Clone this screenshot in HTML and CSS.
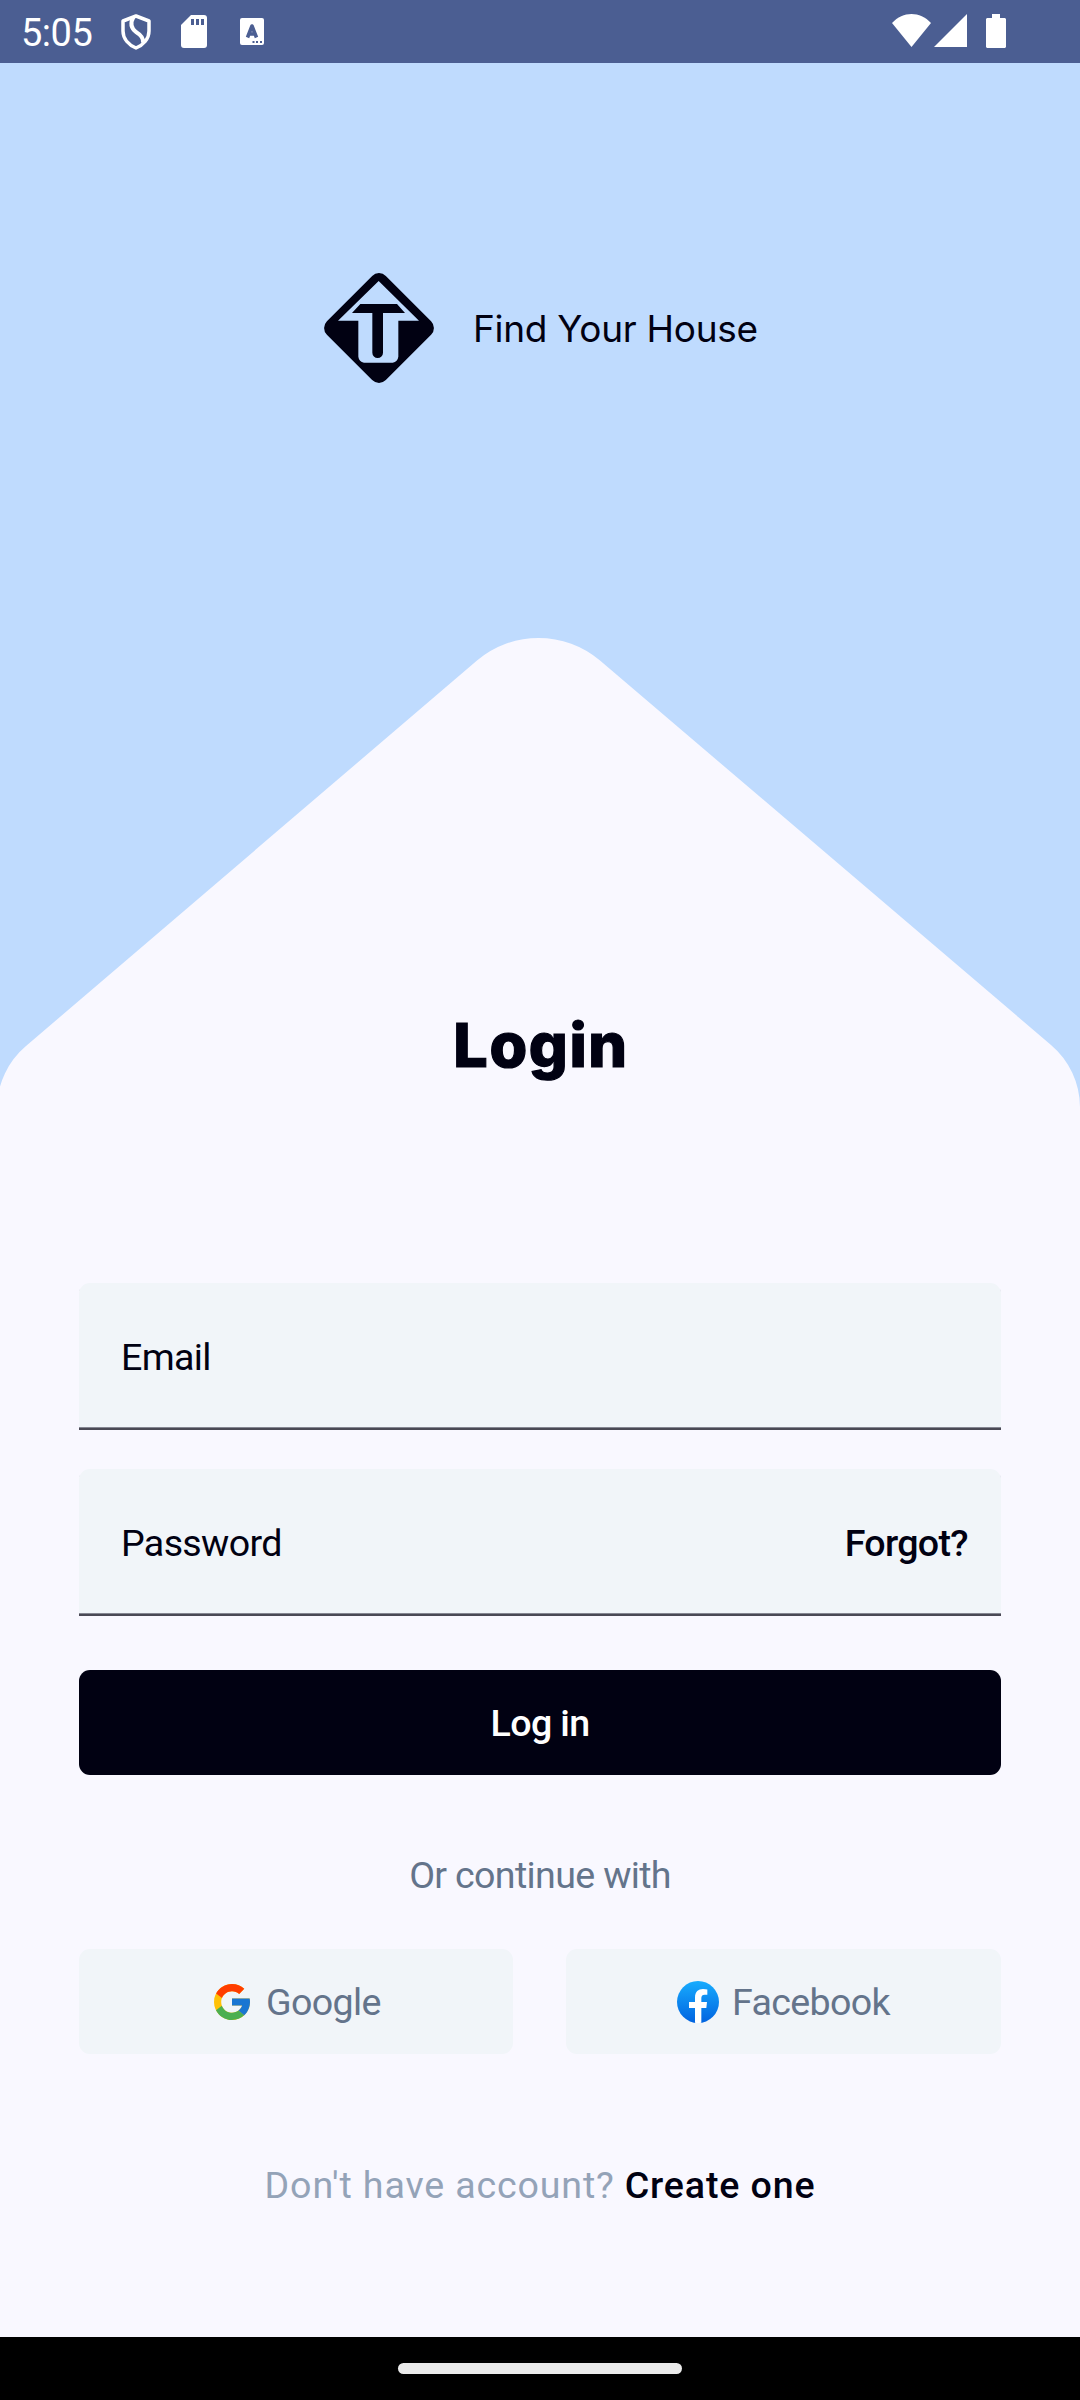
FILE: index.html
```html
<!DOCTYPE html>
<html lang="en">
<head>
<meta charset="utf-8">
<title>Login</title>
<link rel="stylesheet" href="styles.css">
</head>
<body>
<div class="screen">
  <header class="status">
    <span class="clock">5:05</span>
    <svg class="shield" width="30" height="36" viewBox="0 0 30 36" fill="none" stroke="#fff" stroke-width="3.500" stroke-linejoin="round"><path d="M15 2 28 7V17C28 25 22 31 15 34 8 31 2 25 2 17V7Z"/><path d="M12.500 3C9 9 10 14 15 18 20 21 23 24 22 29" stroke-width="4"/></svg>
    <svg class="sdcard" width="26" height="33" viewBox="0 0 26 33"><path fill="#fff" d="M10 0H23a3 3 0 0 1 3 3V30a3 3 0 0 1-3 3H3a3 3 0 0 1-3-3V10Z"/><path fill="#4b5e92" d="M10 4h3v6h-3zM15 4h3v6h-3zM20 4h3v6h-3z"/></svg>
    <svg class="keyboard" width="24" height="27" viewBox="0 0 24 27"><rect width="24" height="27" rx="2" fill="#fff"/><path d="M7.500 19.500 12 8 16.500 19.500M9 16h6" fill="none" stroke="#4b5e92" stroke-width="3.600" stroke-linejoin="round"/><path fill="#4b5e92" d="M12.500 23h2v2h-2zM16 23h2v2h-2zM20 23h2v2h-2z"/></svg>
    <span class="spacer"></span>
    <svg class="wifi" width="39" height="33" viewBox="0 0 39 33"><path fill="#fff" d="M0 9C11-3 28-3 39 9L19.500 33Z"/></svg>
    <svg class="signal" width="33" height="33" viewBox="0 0 33 33"><path fill="#fff" d="M33 0V33H0Z"/></svg>
    <svg class="battery" width="20" height="34" viewBox="0 0 20 34"><path fill="#fff" d="M6 0h8v4h5l1 1v28l-1 1H1l-1-1V5l1-1h5z"/></svg>
  </header>

  <main class="content">
    <svg class="roof" width="1080" height="1060" viewBox="0 63 1080 1060"><path fill="#f9f8ff" d="M-3 1123V1107A82 82 0 0 1 26 1046L477 660.500A95 95 0 0 1 600 660.500L1051 1045A82 82 0 0 1 1080 1107V1123Z"/></svg>

    <div class="brand">
      <svg width="110" height="110" viewBox="42 39 330 330"><rect x="82" y="79" width="250" height="250" rx="29" fill="#010112" transform="rotate(45 207 204)"/><path fill="#bfdbfe" d="M206 63 327 182H265V290Q263 305 248 308H162Q147 305 145 290V182H84Z"/><path fill="#010112" d="M151 132H261L285 159H219V278A16 16 0 0 1 187 278V159H126Z"/></svg>
      <span class="brand-name">Find Your House</span>
    </div>

    <h1 class="title">Login</h1>

    <form class="form">
      <div class="field"><span class="label">Email</span></div>
      <div class="field"><span class="label">Password</span><a class="forgot">Forgot?</a></div>
      <button class="submit" type="button">Log in</button>
    </form>

    <p class="or"><span>Or continue with</span></p>

    <div class="social">
      <button class="provider google" type="button">
        <svg width="36" height="36" viewBox="4 4 40 40"><path fill="#FFC107" d="M43.611 20.083H42V20H24v8h11.303c-1.649 4.657-6.080 8-11.303 8-6.627 0-12-5.373-12-12s5.373-12 12-12c3.059 0 5.842 1.154 7.961 3.039l5.657-5.657C34.046 6.053 29.268 4 24 4 12.955 4 4 12.955 4 24s8.955 20 20 20 20-8.955 20-20c0-1.341-.138-2.650-.389-3.917z"/><path fill="#FF3D00" d="M6.306 14.691l6.571 4.819C14.655 15.108 18.961 12 24 12c3.059 0 5.842 1.154 7.961 3.039l5.657-5.657C34.046 6.053 29.268 4 24 4 16.318 4 9.656 8.337 6.306 14.691z"/><path fill="#4CAF50" d="M24 44c5.166 0 9.860-1.977 13.409-5.192l-6.190-5.238C29.211 35.091 26.715 36 24 36c-5.202 0-9.619-3.317-11.283-7.946l-6.522 5.025C9.505 39.556 16.227 44 24 44z"/><path fill="#1976D2" d="M43.611 20.083H42V20H24v8h11.303c-.792 2.237-2.231 4.166-4.087 5.571l6.193 5.238C36.971 39.205 44 34 44 24c0-1.341-.138-2.650-.389-3.917z"/></svg>
        <span class="name">Google</span>
      </button>
      <button class="provider facebook" type="button">
        <svg width="42" height="42" viewBox="0 0 126 126"><defs><linearGradient id="fb" x1="0" y1="0" x2="0" y2="1"><stop offset="0" stop-color="#18acfe"/><stop offset="1" stop-color="#0163e0"/></linearGradient></defs><circle cx="63" cy="63" r="63" fill="url(#fb)"/><path fill="#fff" d="M54 125.500V81H36V63H54V50C54 32 64 24 78 24Q86 24 91 25.500V41H83Q73 41 73 51V63H90L88 81H73V125.500Q63 127 54 125.500Z"/></svg>
        <span class="name">Facebook</span>
      </button>
    </div>

    <p class="signup"><span class="ask">Don't have account?</span><a class="create">Create one</a></p>
  </main>

  <footer class="navbar"><div class="pill"></div></footer>
</div>
</body>
</html>
```
FILE: styles.css
```css
* { box-sizing: border-box; }

body {
  margin: 0;
  font-family: Roboto, "Noto Sans", sans-serif;
  font-size: 37.6px;
  line-height: 44px;
  letter-spacing: -0.66px;
  color: #010112;
}

svg { display: block; flex: none; }

.screen {
  width: 1080px;
  height: 2400px;
  display: flex;
  flex-direction: column;
  overflow: hidden;
}

.status {
  height: 63px;
  flex: none;
  display: flex;
  align-items: flex-start;
  padding: 14px 74px 0 21px;
  background: #4b5e92;
}

.clock {
  width: 100px;
  height: 44px;
  font-size: 38px;
  line-height: 39px;
  letter-spacing: -0.5px;
  color: #fff;
}

.sdcard { margin: 1px 0 0 30px; }
.keyboard { margin: 4px 0 0 33px; }
.spacer { flex: 1; }
.signal { margin-left: 3px; }
.battery { margin-left: 19px; }

.content {
  position: relative;
  flex: 1;
  display: flex;
  flex-direction: column;
  padding: 210px 79px 0;
  background: linear-gradient(#bfdbfe 1060px, #f9f8ff 1060px);
}

.content > * { position: relative; }
.content > .roof { position: absolute; top: 0; left: 0; }

.brand {
  height: 110px;
  display: flex;
  align-items: center;
  gap: 39px;
  padding-left: 245px;
}

.brand-name {
  padding-top: 2px;
  font-family: Inter, sans-serif;
  font-size: 37px;
  letter-spacing: -0.28px;
  white-space: nowrap;
}

.title {
  margin: 624px 0 0;
  height: 76px;
  text-align: center;
  font-family: Inter, sans-serif;
  font-size: 61px;
  font-weight: 800;
  line-height: 76px;
  letter-spacing: 1.6px;
  text-indent: 2px;
  -webkit-text-stroke: 1.2px #010112;
}

.form { margin-top: 200px; display: flex; flex-direction: column; }

.field {
  height: 147px;
  margin-bottom: 39px;
  padding: 0 33px 0 42px;
  display: flex;
  justify-content: space-between;
  align-items: center;
  background: #f1f5f9;
  border-radius: 11px 11px 0 0;
  box-shadow: inset 0 -2px #4a4955, inset 0 -3px #858792;
}

.forgot, .submit, .create { font-weight: 500; }

button { border: 0; font: inherit; letter-spacing: inherit; padding: 0; }

.submit {
  height: 105px;
  margin-top: 15px;
  border-radius: 11px;
  background: #010112;
  color: #fff;
}

.or { margin: 78px 0 0; text-align: center; color: #64748b; }

.social { display: grid; grid-template-columns: 434px 435px; gap: 53px; margin-top: 52px; }

.provider {
  height: 105px;
  display: flex;
  align-items: center;
  border-radius: 11px;
  background: #f1f5f9;
  color: #64748b;
}

.google { padding-left: 135px; gap: 16px; }
.facebook { padding-left: 111px; gap: 13px; }

.signup {
  margin: 109px 0 0;
  display: flex;
  justify-content: center;
  gap: 10px;
  letter-spacing: 0.85px;
  white-space: nowrap;
}

.ask { color: #94a3b8; }

.navbar {
  height: 63px;
  flex: none;
  display: flex;
  justify-content: center;
  padding-top: 26px;
  background: #000;
}

.pill { width: 284px; height: 11px; border-radius: 6px; background: #ebebeb; }
```
